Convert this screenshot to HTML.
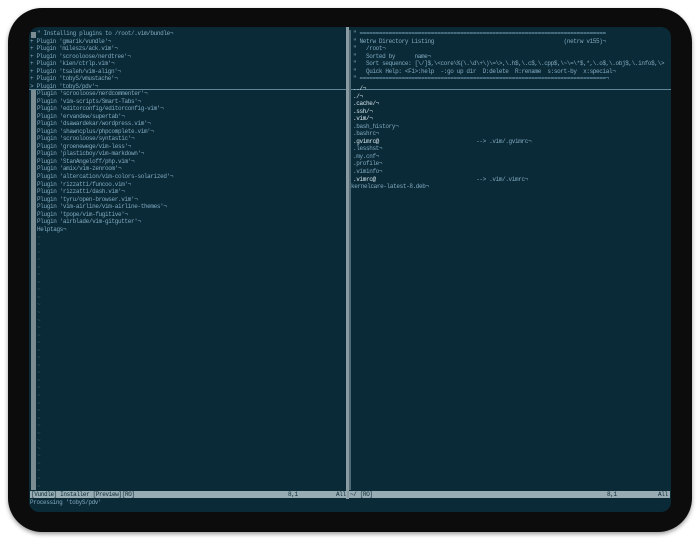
<!DOCTYPE html>
<html><head><style>
body{margin:0;width:700px;height:539px;background:#fff;position:relative;overflow:hidden;font-family:"Liberation Mono",monospace}
.bez{position:absolute;left:8px;top:8px;width:684px;height:524px;background:#0c0c0c;border-radius:34px;box-shadow:0 2px 4px rgba(0,0,0,.4)}
.scr{position:absolute;left:29px;top:27px;width:642px;height:485px;background:#0b2a37;border-radius:10px;overflow:hidden}
.t{position:absolute;font-size:6px;line-height:7.55px;color:#7fa9bf;white-space:pre;letter-spacing:-0.36px}
.w{color:#d6e6ee}
.g{position:absolute;background:#7b8c92}
.st{position:absolute;top:464px;height:7px;background:#98acb3;color:#0b2a37;font-size:6px;line-height:7px;white-space:pre;letter-spacing:-0.36px;overflow:hidden}
.st span{position:absolute;top:0}
</style></head><body>
<div class="bez"></div>
<div class="scr">
<div class="g" style="left:2px;top:5px;width:5px;height:6px"></div>
<div class="t" style="left:8px;top:3px">" Installing plugins to /root/.vim/bundle¬</div>
<div class="t" style="left:1px;top:10.5px">+ Plugin 'gmarik/vundle'¬
+ Plugin 'mileszs/ack.vim'¬
+ Plugin 'scrooloose/nerdtree'¬
+ Plugin 'kien/ctrlp.vim'¬
+ Plugin 'tsaleh/vim-align'¬
+ Plugin 'tobyS/vmustache'¬
&gt; Plugin 'tobyS/pdv'¬</div>
<div style="position:absolute;left:0;top:62px;width:317px;height:1px;background:#5f8596"></div>
<div style="position:absolute;left:320px;top:62px;width:322px;height:1px;background:#5f8596"></div>
<div class="g" style="left:2px;top:63px;width:5px;height:400px"></div>
<div class="t" style="left:8px;top:63px">Plugin 'scrooloose/nerdcommenter'¬
Plugin 'vim-scripts/Smart-Tabs'¬
Plugin 'editorconfig/editorconfig-vim'¬
Plugin 'ervandew/supertab'¬
Plugin 'dsawardekar/wordpress.vim'¬
Plugin 'shawncplus/phpcomplete.vim'¬
Plugin 'scrooloose/syntastic'¬
Plugin 'groenewege/vim-less'¬
Plugin 'plasticboy/vim-markdown'¬
Plugin 'StanAngeloff/php.vim'¬
Plugin 'amix/vim-zenroom'¬
Plugin 'altercation/vim-colors-solarized'¬
Plugin 'rizzatti/funcoo.vim'¬
Plugin 'rizzatti/dash.vim'¬
Plugin 'tyru/open-browser.vim'¬
Plugin 'vim-airline/vim-airline-themes'¬
Plugin 'tpope/vim-fugitive'¬
Plugin 'airblade/vim-gitgutter'¬
Helptags¬</div>
<div class="t" style="left:8px;top:206.5px;color:#3b6272">~
~
~
~
~
~
~
~
~
~
~
~
~
~
~
~
~
~
~
~
~
~
~
~
~
~
~
~
~
~
~
~
~
~
~</div>
<div style="position:absolute;left:317px;top:0;width:3px;height:472px;background:#8a9ca2"></div>
<div class="g" style="left:320px;top:3px;width:2px;height:460px;background:#4f6a74"></div>
<div class="t" style="left:324px;top:3px">" ============================================================================
" Netrw Directory Listing                                        (netrw v155)¬
"   /root¬
"   Sorted by      name¬
"   Sort sequence: [\/]$,\&lt;core\%(\.\d\+\)\=\&gt;,\.h$,\.c$,\.cpp$,\~\=\*$,*,\.o$,\.obj$,\.info$,\&gt;
"   Quick Help: &lt;F1&gt;:help  -:go up dir  D:delete  R:rename  s:sort-by  x:special¬
" ============================================================================¬</div>
<div class="t w" style="left:324px;top:58px">../¬
./¬
.cache/¬
.ssh/¬
.vim/¬</div>
<div class="t" style="left:324px;top:95.75px">.bash_history¬
.bashrc¬</div>
<div class="t w" style="left:324px;top:110.85px">.gvimrc@                              <span style="color:#7fa9bf">--&gt; .vim/.gvimrc¬</span></div>
<div class="t" style="left:324px;top:118.4px">.lesshst¬
.my.cnf¬
.profile¬
.viminfo¬</div>
<div class="t w" style="left:324px;top:148.6px">.vimrc@                               <span style="color:#7fa9bf">--&gt; .vim/.vimrc¬</span></div>
<div class="t" style="left:322px;top:156.15px">kernelcare-latest-8.deb¬</div>
<div class="st" style="left:1px;width:317px"><span style="left:1px">[Vundle] Installer [Preview][RO]</span><span style="left:258px">8,1</span><span style="left:306px">All</span></div>
<div class="st" style="left:320px;width:321px"><span style="left:1px">~/ [RO]</span><span style="left:258px">8,1</span><span style="left:309px">All</span></div>
<div class="t" style="left:1px;top:472px">Processing 'tobyS/pdv'</div>
</div>
</body></html>
